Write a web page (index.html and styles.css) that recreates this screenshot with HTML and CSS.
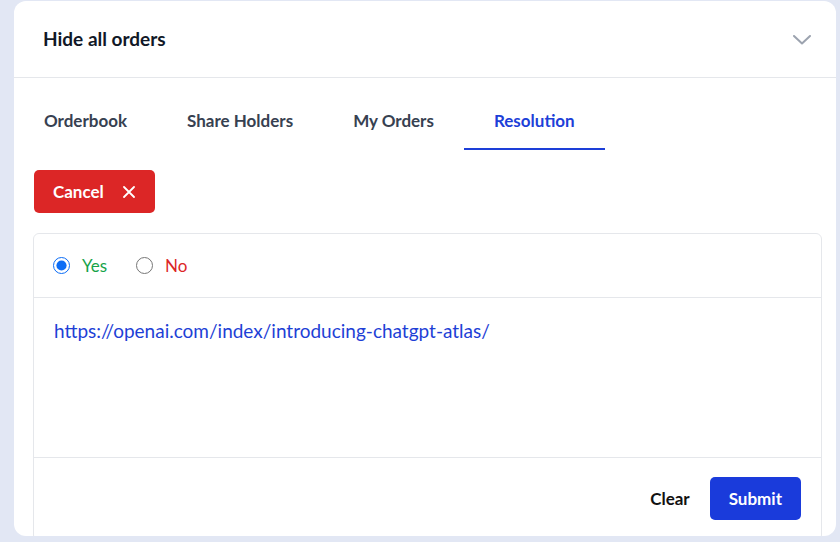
FILE: index.html
```html
<!DOCTYPE html>
<html lang="en">
<head>
    <meta charset="UTF-8">
    <meta name="viewport" content="width=device-width, initial-scale=1.0">
    <title>Resolution</title>
    <link rel="stylesheet" href="styles.css">
</head>
<body>
    <div class="card">
        <div class="card-header">
            <span class="card-title">Hide all orders</span>
            <svg class="chevron" width="18" height="10" viewBox="0 0 18 10">
                <path d="M1 1 L9 8.5 L17 1" fill="none" stroke="#9ca3af" stroke-width="2" stroke-linecap="round" stroke-linejoin="round"/>
            </svg>
        </div>
        <div class="tabs">
            <div class="tab">Orderbook</div>
            <div class="tab">Share Holders</div>
            <div class="tab">My Orders</div>
            <div class="tab active">Resolution</div>
        </div>
        <div class="panel">
            <button class="btn-cancel">Cancel
                <svg width="12" height="12" viewBox="0 0 12 12">
                    <path d="M1 1 L11 11 M11 1 L1 11" stroke="#fff" stroke-width="1.8" stroke-linecap="round"/>
                </svg>
            </button>
            <div class="resolve-box">
                <div class="options">
                    <label class="option yes"><input type="radio" name="outcome" checked> Yes</label>
                    <label class="option no"><input type="radio" name="outcome"> No</label>
                </div>
                <div class="source">https://openai.com/index/introducing-chatgpt-atlas/</div>
                <div class="actions">
                    <button class="btn-clear">Clear</button>
                    <button class="btn-submit">Submit</button>
                </div>
            </div>
        </div>
    </div>
</body>
</html>
```

FILE: styles.css
```css
body {
    margin: 0;
    height: 542px;
    overflow: hidden;
    background: #e2e7f4;
    font-family: Lato, "Open Sans", sans-serif;
}
.card {
    margin: 1px 0 0 14px;
    width: 822px;
    height: 535px;
    background: #fff;
    border-radius: 12px;
    overflow: hidden;
}
.card-header {
    height: 76px;
    display: flex;
    align-items: center;
    justify-content: space-between;
    padding: 0 25px 0 29px;
    border-bottom: 1px solid #e5e7eb;
}
.card-title {
    margin-top: -2px;
    font-size: 19px;
    font-weight: 700;
    color: #111827;
}
.chevron {
    margin-top: 2px;
}
.tabs {
    display: flex;
}
.tab {
    padding: 32px 30px 17px;
    line-height: 21px;
    font-size: 17px;
    font-weight: 700;
    color: #374151;
    border-bottom: 2px solid transparent;
}
.tab.active {
    color: #1d3fd8;
    border-bottom-color: #1d3fd8;
}
.panel {
    padding: 20px 14px 0 19px;
}
.btn-cancel {
    margin-left: 1px;
    height: 43px;
    padding: 0 20px 0 19px;
    border: none;
    border-radius: 5px;
    background: #dc2626;
    color: #fff;
    font-family: inherit;
    font-size: 17px;
    font-weight: 700;
    display: flex;
    align-items: center;
    gap: 19px;
}
.resolve-box {
    margin-top: 20px;
    border: 1px solid #e5e7eb;
    border-radius: 6px;
}
.options {
    height: 63px;
    display: flex;
    align-items: center;
    gap: 29px;
    padding-left: 19px;
    border-bottom: 1px solid #e5e7eb;
}
.option {
    display: flex;
    align-items: center;
    gap: 12px;
    font-size: 17px;
}
.option input {
    width: 17px;
    height: 17px;
    margin: 0;
    accent-color: #0b6cf5;
}
.option.yes { color: #16a34a; }
.option.no { color: #dc2626; }
.source {
    height: 118px;
    padding: 21px 20px 20px;
    font-size: 19px;
    line-height: 24px;
    color: #1e3fd6;
    border-bottom: 1px solid #e5e7eb;
}
.actions {
    display: flex;
    justify-content: flex-end;
    align-items: center;
    gap: 20px;
    padding: 19px 20px 20px;
}
.btn-clear {
    border: none;
    background: none;
    padding: 0;
    font-family: inherit;
    font-size: 17px;
    font-weight: 700;
    color: #111;
}
.btn-submit {
    height: 43px;
    padding: 0 19px;
    border: none;
    border-radius: 5px;
    background: #1a3bdb;
    color: #fff;
    font-family: inherit;
    font-size: 17px;
    font-weight: 700;
}
```
